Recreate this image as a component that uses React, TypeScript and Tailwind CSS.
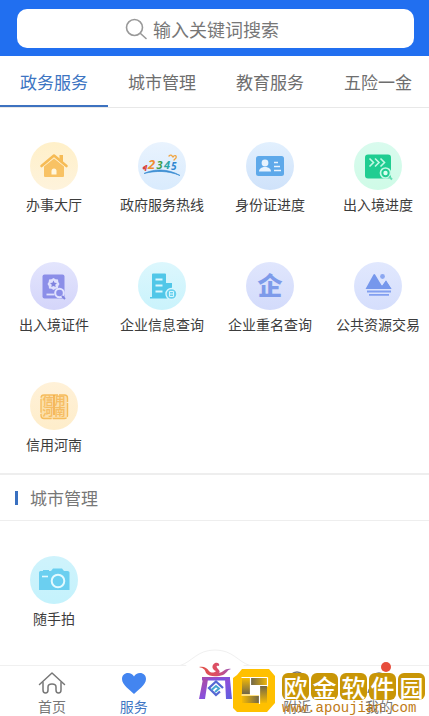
import { useState } from 'react';
import type { ReactNode } from 'react';
import clsx from 'clsx';

interface Service {
  label: string;
  circle: string;
  icon: ReactNode;
}

const cjkFont = '"Noto Sans CJK SC", sans-serif';

function HouseIcon() {
  return (
    <svg viewBox="0 0 48 48" className="size-full" aria-hidden="true">
      <path d="M11.500 24 24 13.500 36.500 24" fill="none" stroke="#f6bb55" strokeWidth="2.600" strokeLinejoin="round" strokeLinecap="round" />
      <path d="M29.500 13h3.500v7l-3.500-3z" fill="#f6bb55" />
      <path d="M14 24.500 24 16.500l10 8V34a1 1 0 0 1-1 1H15a1 1 0 0 1-1-1z" fill="#f8c264" />
      <path d="M21.500 32.500v-3.500a2.500 2.500 0 0 1 5 0v3.500z" fill="#fff7df" />
    </svg>
  );
}

function HotlineIcon() {
  return (
    <svg viewBox="0 0 48 48" className="size-full" aria-hidden="true">
      <g fontFamily='"Open Sans", "Liberation Sans", sans-serif' fontWeight="700" fontStyle="italic">
        <text x="5" y="29" fontSize="9" fill="#d8433e">1</text>
        <text x="10" y="27" fontSize="13" fill="#f08c2e">2</text>
        <text x="18.500" y="27" fontSize="11" fill="#3f9f4b">3</text>
        <text x="26" y="27" fontSize="11" fill="#2ca6a4">4</text>
        <text x="33" y="28" fontSize="10" fill="#2f86cf">5</text>
      </g>
      <path d="M6 31.500c10-5 24-5 36 2-12-5-24-5-36-2z" fill="#3c8ed3" stroke="#3c8ed3" strokeWidth=".7" />
      <path d="M31 14c2-2 3 0 4 1 1-2 4-2 3 1l-2 2" fill="none" stroke="#f0a542" strokeWidth="1.300" strokeLinecap="round" />
      <circle cx="6" cy="26" r="1.500" fill="#d8433e" />
    </svg>
  );
}

function IdCardIcon() {
  return (
    <svg viewBox="0 0 48 48" className="size-full" aria-hidden="true">
      <rect x="10" y="14" width="28" height="20" rx="2.500" fill="#5ea9ea" />
      <circle cx="19" cy="21" r="3.400" fill="#e8f3fe" />
      <path d="M13 29.500c0-3 3-4 4.500-4.500h3c1.500.5 4.500 1.500 4.500 4.500z" fill="#e8f3fe" />
      <path d="M28 20.500h4M28 24.500h6M28 28.500h7" stroke="#e8f3fe" strokeWidth="1.500" />
    </svg>
  );
}

function ProgressIcon() {
  return (
    <svg viewBox="0 0 48 48" className="size-full" aria-hidden="true">
      <rect x="11" y="12.500" width="26" height="24" rx="3" fill="#20cd91" />
      <path d="m15.500 16.500 4 4-4 4m5.500-8 4 4-4 4m5.500-8 4 4-4 4" fill="none" stroke="#c4f9e4" strokeWidth="1.600" />
      <circle cx="31.500" cy="31" r="5" fill="#20cd91" stroke="#c4f9e4" strokeWidth="1.700" />
      <circle cx="31.500" cy="31" r="2.200" fill="#dcfff0" />
      <path d="m35 34.500 3 3" stroke="#62dcb1" strokeWidth="2" />
    </svg>
  );
}

function PermitIcon() {
  return (
    <svg viewBox="0 0 48 48" className="size-full" aria-hidden="true">
      <rect x="12.500" y="12.500" width="22" height="24" rx="2" fill="#8b8ee8" />
      <path d="m23.500 16 2 1.200 2.500.3.300 2.500 1.200 2-1.200 2-.3 2.500-2.500.3-2 1.200-2-1.200-2.500-.3-.3-2.500-1.200-2 1.200-2 .3-2.500 2.500-.3z" fill="#dfe0fd" />
      <path d="m23.500 18.500 1.100 2.200 2.400.3-1.800 1.700.5 2.400-2.200-1.200-2.200 1.200.5-2.400-1.800-1.700 2.400-.3z" fill="#8083df" />
      <path d="M16.500 32.500h8" stroke="#dfe0fd" strokeWidth="1.800" />
      <circle cx="29.500" cy="31" r="4.300" fill="#8b8ee8" stroke="#e1e2fe" strokeWidth="2" />
      <path d="m32 34 3 3" stroke="#8083df" strokeWidth="2" />
    </svg>
  );
}

function CompanyIcon() {
  return (
    <svg viewBox="0 0 48 48" className="size-full" aria-hidden="true">
      <path d="M12 36.500V35h2V12.500a1 1 0 0 1 1-1h12a1 1 0 0 1 1 1V21h6v15.500z" fill="#51c7e8" />
      <path d="M17.500 17.500h7M17.500 23.500h7M17.500 29.500h7" stroke="#dcf7fe" strokeWidth="2" />
      <circle cx="33.500" cy="32" r="5.500" fill="#68d0ed" stroke="#d6f6fe" strokeWidth="1.400" />
      <path d="M31.500 29.500h4v5h-4zM31.500 32h4" fill="none" stroke="#d6f6fe" strokeWidth="1" />
    </svg>
  );
}

function CompanyNameIcon() {
  return (
    <svg viewBox="0 0 48 48" className="size-full" aria-hidden="true">
      <text x="24" y="33" textAnchor="middle" fontSize="25" fontWeight="900" fill="#7e9bea" fontFamily={cjkFont}>
        企
      </text>
    </svg>
  );
}

function ResourceIcon() {
  return (
    <svg viewBox="0 0 48 48" className="size-full" aria-hidden="true">
      <path d="m11.500 27 8-14.500q.8-1 1.600 0L28 24l4-5.500 5.500 8.500z" fill="#7697ec" />
      <path d="M26 21.500 28 24l4-5.500 5.500 8.500H26z" fill="#7697ec" />
      <circle cx="28.500" cy="14.500" r="2.400" fill="#8ba7f1" />
      <path d="M13 29.500h24M15 32.800h20" stroke="#829ff0" strokeWidth="1.800" />
    </svg>
  );
}

function SealIcon() {
  return (
    <svg viewBox="0 0 48 48" className="size-full" aria-hidden="true">
      <rect x="11" y="13" width="26.500" height="23.500" rx="3" fill="#fce0ab" stroke="#f6bc5c" strokeWidth="1.400" strokeDasharray="14 1" />
      <path d="M24 13v20" stroke="#f3a63d" strokeWidth="1.400" />
      <g fontSize="11" fontWeight="700" fill="#f6bd63" fontFamily={cjkFont}>
        <text x="12.500" y="23">信</text>
        <text x="24.500" y="23">用</text>
        <text x="12.500" y="34">河</text>
        <text x="24.500" y="34">南</text>
      </g>
    </svg>
  );
}

function CameraIcon() {
  return (
    <svg viewBox="0 0 48 48" className="size-full" aria-hidden="true">
      <path d="M9 16.500q0-1.500 1.500-1.500H13v-1h6v1h2l2-2.500h9l2 2.500h3.500q2 0 2 1.500V34H9z" fill="#6bcff0" />
      <circle cx="28" cy="25" r="6.300" fill="#6bcff0" stroke="#e3faff" strokeWidth="2" />
      <path d="M12 20.500h6" stroke="#e3faff" strokeWidth="1.600" />
    </svg>
  );
}

const governmentServices: Service[] = [
  { label: '办事大厅', circle: 'from-[#fff0c9] to-[#fef3dc]', icon: <HouseIcon /> },
  { label: '政府服务热线', circle: 'from-[#e9f3fe] to-[#d9ebfd]', icon: <HotlineIcon /> },
  { label: '身份证进度', circle: 'from-[#e2f0fe] to-[#cfe2fa]', icon: <IdCardIcon /> },
  { label: '出入境进度', circle: 'from-[#d9fbee] to-[#cffbe7]', icon: <ProgressIcon /> },
  { label: '出入境证件', circle: 'from-[#e3e5fd] to-[#d4d5fa]', icon: <PermitIcon /> },
  { label: '企业信息查询', circle: 'from-[#dcf7fd] to-[#caf3fc]', icon: <CompanyIcon /> },
  { label: '企业重名查询', circle: 'from-[#e0e6fd] to-[#d3dbfb]', icon: <CompanyNameIcon /> },
  { label: '公共资源交易', circle: 'from-[#e1e8fe] to-[#d5defc]', icon: <ResourceIcon /> },
  { label: '信用河南', circle: 'from-[#fff1d8] to-[#feedca]', icon: <SealIcon /> },
];

const cityServices: Service[] = [
  { label: '随手拍', circle: 'from-[#cff3fc] to-[#c4f2fc]', icon: <CameraIcon /> },
];

const tabs = ['政务服务', '城市管理', '教育服务', '五险一金'];

function ServiceGrid({ services }: { services: Service[] }) {
  return (
    <div className="-mr-[3px] grid grid-cols-4 gap-y-[50px]">
      {services.map((service) => (
        <button key={service.label} type="button" className="flex flex-col items-center gap-1.5">
          <span className={clsx('size-12 rounded-full bg-linear-to-b', service.circle)}>{service.icon}</span>
          <span className="text-sm leading-4 whitespace-nowrap text-[#3c3c3c]">{service.label}</span>
        </button>
      ))}
    </div>
  );
}

function HomeIcon() {
  return (
    <svg viewBox="0 0 28 24" className="h-6 w-7" fill="none" stroke="#777" strokeWidth="1.500" strokeLinecap="round" strokeLinejoin="round" aria-hidden="true">
      <path d="M1.500 14.500 14 3l12.500 11.500" />
      <path d="M5 12.500V20q0 3 2.500 3t2.500-3v-3q0-3 4-3t4 3v3q0 3 2.500 3t2.500-3v-7.500" />
    </svg>
  );
}

function HeartIcon() {
  return (
    <svg viewBox="0 0 28 24" className="h-6 w-7" fill="#4385f0" aria-hidden="true">
      <path d="M14 24C10 20 2 15 2 9 2 5.500 4.500 3 8 3c2.700 0 4.800 1.400 6 3.500C15.200 4.400 17.300 3 20 3c3.500 0 6 2.500 6 6 0 6-8 11-12 15z" />
    </svg>
  );
}

function PinIcon() {
  return (
    <svg viewBox="0 0 28 24" className="h-6 w-7" fill="none" stroke="#777" strokeWidth="1.500" aria-hidden="true">
      <path d="M14 23c-3-4-8-8-8-13a8 8 0 0 1 16 0c0 5-5 9-8 13z" />
      <circle cx="14" cy="10" r="2.500" />
    </svg>
  );
}

function PersonIcon() {
  return (
    <svg viewBox="0 0 28 24" className="h-6 w-7" fill="none" stroke="#777" strokeWidth="1.500" aria-hidden="true">
      <circle cx="14" cy="9" r="6" />
      <path d="M3 23c1-6 6-8 11-8s10 2 11 8" />
    </svg>
  );
}

function ShangLogo() {
  return (
    <svg viewBox="0 0 36 40" className="h-10 w-9" aria-hidden="true">
      <defs>
        <linearGradient id="cauldron" x1="0" y1="0" x2="1" y2="1">
          <stop offset="0" stopColor="#b04b9d" />
          <stop offset=".5" stopColor="#8a50db" />
          <stop offset="1" stopColor="#5b60e0" />
        </linearGradient>
        <linearGradient id="flame" x1="0" y1="0" x2="1" y2="0">
          <stop offset="0" stopColor="#e15245" />
          <stop offset=".55" stopColor="#dc4e65" />
          <stop offset="1" stopColor="#9b55ba" />
        </linearGradient>
      </defs>
      <path d="M2 5c5-1 8 1 10 4 2 2 5 2 7 0-4-1-5-6-1-8 3-1 5 1 4 3-3-1-3 1-1 3s2 3 1 4c5-1 6-5 12-4-4 1-4 4-8 6-6 2-14 2-17-2-1-4-3-5-7-6z" fill="url(#flame)" />
      <path d="M5 15h28v3.500H5z" fill="url(#cauldron)" />
      <path d="M6 17h5L8 37H2zM28 17h5l2 20h-6z" fill="url(#cauldron)" />
      <path d="M23 29.500 19 33l-7-7 7-6.500 7 6.500" fill="none" stroke="#5568d4" strokeWidth="2.300" />
      <path d="m14.500 28 4.500-4 3 2.500-4 3.500" fill="none" stroke="#46a6d1" strokeWidth="2" />
    </svg>
  );
}

const navItems = [
  { label: '首页', icon: <HomeIcon /> },
  { label: '服务', icon: <HeartIcon />, active: true },
  { label: '商', icon: <ShangLogo />, center: true },
  { label: '附近', icon: <PinIcon /> },
  { label: '我的', icon: <PersonIcon />, badge: true },
];

function BottomNav() {
  return (
    <nav className="relative mt-auto grid h-[51px] grid-cols-5 border-t border-[#f0f0f0] bg-white pr-[9px] pl-[11px]">
      {navItems.map((item) =>
        item.center ? (
          <button key={item.label} type="button" aria-label={item.label} className="relative">
            <svg viewBox="0 0 70 40" className="absolute bottom-7 left-1/2 h-10 w-[70px] max-w-none -translate-x-1/2" aria-hidden="true">
              <path d="M0 21.500C10 18 15 2 35 2s25 16 35 19.500V40H0z" fill="#fff" />
              <path d="M0 17.500C12 14 17 2 35 2s23 12 35 15.500" fill="none" stroke="#f0f0f0" />
            </svg>
            <span className="absolute bottom-3.5 left-1/2 -translate-x-1/2">{item.icon}</span>
          </button>
        ) : (
          <button
            key={item.label}
            type="button"
            className={clsx('relative flex flex-col items-center pt-1', item.active ? 'text-[#4177c4]' : 'text-[#777777]')}
          >
            {item.icon}
            <span className="mt-1 text-sm leading-4">{item.label}</span>
            {item.badge && <span className="absolute -top-1 left-1/2 ml-0.5 size-2.5 rounded-full bg-[#e74d3c]" />}
          </button>
        ),
      )}
      <Watermark />
    </nav>
  );
}

function Watermark() {
  return (
    <div className="pointer-events-none absolute right-1 bottom-0 flex items-start gap-1.5">
      <svg viewBox="0 0 43 45" className="h-[45px] w-[43px]" aria-hidden="true">
        <defs>
          <linearGradient id="goldRight" x1="0" y1="0" x2="1" y2="0">
            <stop offset="0" stopColor="#716749" />
            <stop offset="1" stopColor="#f5ba04" />
          </linearGradient>
          <linearGradient id="goldLeft" x1="1" y1="0" x2="0" y2="0">
            <stop offset="0" stopColor="#716749" />
            <stop offset="1" stopColor="#f5ba04" />
          </linearGradient>
          <linearGradient id="goldDown" x1="0" y1="0" x2="0" y2="1">
            <stop offset="0" stopColor="#716749" />
            <stop offset="1" stopColor="#f5ba04" />
          </linearGradient>
          <linearGradient id="goldUp" x1="0" y1="1" x2="0" y2="0">
            <stop offset="0" stopColor="#716749" />
            <stop offset="1" stopColor="#f5ba04" />
          </linearGradient>
        </defs>
        <path d="M9 0h27l6 7v27l-8 9H4l-4-4V9l4-3z" fill="#ffc000" />
        <path d="M17 17h9v9h-9z" fill="#fff" />
        <path d="M9 9h8v16H9z" fill="url(#goldUp)" />
        <path d="M18 9h17v7H18z" fill="url(#goldRight)" />
        <path d="M27 17h7v17h-7z" fill="url(#goldDown)" />
        <path d="M9 27h17v7H9z" fill="url(#goldLeft)" />
        <path d="M8.500 8.500h26M17.500 8.500v17M8.500 26h18M26.500 17v18M17 16.500h18M34.500 8.500v9" fill="none" stroke="#fff" strokeWidth="1.200" />
      </svg>
      <div className="pt-1">
        <div className="flex gap-0.5">
          {['欧', '金', '软', '件', '园'].map((char) => (
            <span key={char} className="flex size-[27px] items-center justify-center rounded-md bg-[#c99606] text-2xl leading-none font-medium text-white">
              {char}
            </span>
          ))}
        </div>
        <p className="font-['Liberation_Mono',monospace] text-sm leading-4 text-[#c07b16]">www.apoujian.com</p>
      </div>
    </div>
  );
}

export default function App() {
  const [activeTab, setActiveTab] = useState(tabs[0]);

  return (
    <div className="flex min-h-screen flex-col overflow-hidden bg-white font-['Noto_Sans_CJK_SC',sans-serif]">
      <header className="bg-[#216ff0] pt-[9px] pr-[15px] pb-2 pl-[17px]">
        <label className="flex h-[39px] items-center justify-center gap-1.5 rounded-[10px] bg-white">
          <svg viewBox="0 0 22 22" className="size-[22px]" fill="none" stroke="#999" strokeWidth="1.600" strokeLinecap="round" aria-hidden="true">
            <circle cx="9.500" cy="9.500" r="8" />
            <path d="m15.500 15.500 5.500 5" />
          </svg>
          <input
            type="search"
            aria-label="搜索"
            placeholder="输入关键词搜索"
            className="w-[153px] text-lg text-[#777777] outline-none placeholder:text-[#777777]"
          />
        </label>
      </header>

      <div role="tablist" className="-mr-[3px] grid h-[52px] grid-cols-4 border-b border-[#e8e8e8]">
        {tabs.map((tab) => (
          <button
            key={tab}
            type="button"
            role="tab"
            aria-selected={tab === activeTab}
            onClick={() => setActiveTab(tab)}
            className={clsx(
              'border-b-2 pt-0.5 text-[17px]',
              tab === activeTab ? 'border-[#3d72c0] text-[#3d75c2]' : 'border-transparent text-[#6e6e6e]',
            )}
          >
            {tab}
          </button>
        ))}
      </div>

      <main>
        <section className="pt-[34px] pb-[21px]">
          <ServiceGrid services={governmentServices} />
        </section>
        <section className="border-t-2 border-[#eeeeee]">
          <div className="flex h-[46px] items-center gap-3 border-b border-[#eeeeee] px-[15px]">
            <span className="h-3.5 w-[3px] bg-[#3970c0]" />
            <h2 className="text-[17px] text-[#777777]">城市管理</h2>
          </div>
          <div className="pt-[35px]">
            <ServiceGrid services={cityServices} />
          </div>
        </section>
      </main>

      <BottomNav />
    </div>
  );
}
